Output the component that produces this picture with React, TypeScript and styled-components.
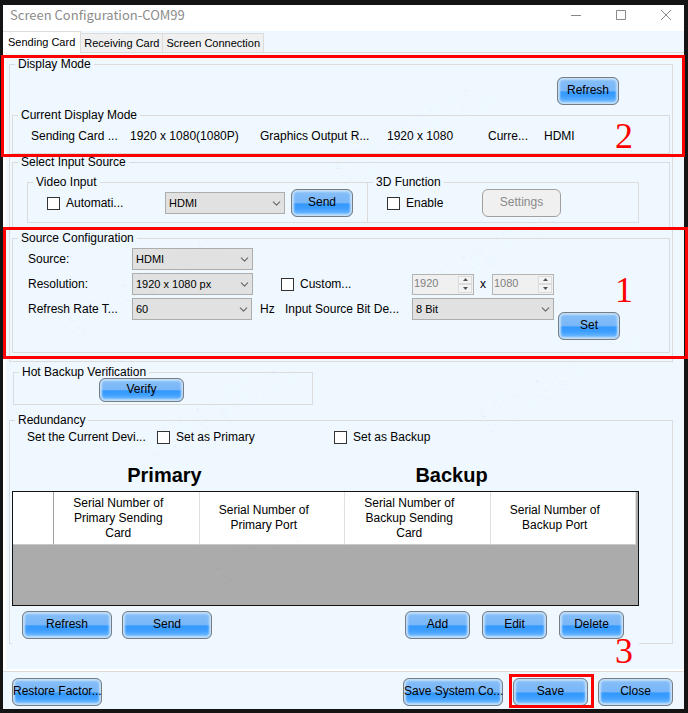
import React from "react";
import styled, { createGlobalStyle } from "styled-components";
import { ChevronDown } from "lucide-react";

const GlobalStyle = createGlobalStyle`
  * {
    box-sizing: border-box;
  }
  body {
    margin: 0;
    background-color: #141414;
    font-family: "Liberation Sans", Arial, sans-serif;
    font-size: 12px;
    line-height: 16px;
    color: #000;
  }
`;

const Window = styled.div`
  position: relative;
  margin: 5px 4px 4px 3px;
  background-color: #eff7ff;
`;
const TitleBar = styled.header`
  display: flex;
  align-items: center;
  justify-content: space-between;
  height: 26px;
  padding: 0 12px 6px 7px;
  background-color: white;
`;
const Title = styled.h1`
  margin: 0;
  font-family: "Noto Sans CJK SC", sans-serif;
  font-size: 13px;
  font-weight: 400;
  line-height: 20px;
  color: #8c8c8c;
`;
const WindowButtons = styled.div`
  display: flex;
  gap: 33px;
`;
const WindowButton = styled.button`
  width: 12px;
  height: 12px;
  padding: 0;
  border: none;
  background: none;
  color: #888;

  svg {
    display: block;
  }
`;

const TabBar = styled.nav`
  display: flex;
  align-items: flex-end;
  height: 22px;
  border-bottom: 1px solid #dcdcdc;
`;
const Tab = styled.button<{ $active?: boolean }>`
  height: ${({ $active }) => ($active ? "22px" : "19px")};
  margin-bottom: ${({ $active }) => ($active ? "-1px" : "0")};
  padding: 0 ${({ $active }) => ($active ? "5px 2px" : "3px")};
  border: 1px solid #dcdcdc;
  border-width: 1px 1px 0 0;
  background-color: ${({ $active }) => ($active ? "white" : "#f0f0f0")};
  font-family: inherit;
  font-size: 11px;
  line-height: 16px;
  color: black;
`;

const Page = styled.main`
  padding: 3px 11px 25px 3px;
  border: 3px solid white;
  border-width: 0 0 2px 3px;
`;
const Group = styled.fieldset`
  min-width: 0;
  margin: 0;
  padding: 0 2px;
  border: 1px solid #dcdcdc;
`;
const Legend = styled.legend`
  margin-left: 3px;
  padding: 0 3px;
  line-height: 16px;
`;
const DisplayGroup = styled(Group)`
  padding-bottom: 8px;
`;
const Marked = styled.div`
  position: relative;
`;
// red frames lie over the form and run past the group borders
const DisplayFrame = styled.div`
  position: absolute;
  inset: -17px -15px -3px -11px;
  border: 3px solid red;
  pointer-events: none;
`;
const SourceFrame = styled(DisplayFrame)`
  inset: -3px -18px -6px -9px;
`;
const SaveFrame = styled(DisplayFrame)`
  inset: -4px -6px -2px -4px;
`;
const StepNumber = styled.span<{ $top: number; $right: number }>`
  position: absolute;
  top: ${({ $top }) => $top}px;
  right: ${({ $right }) => $right}px;
  font-family: "Liberation Serif", serif;
  font-size: 36px;
  line-height: 36px;
  color: red;
`;

const Button = styled.button<{ $width: number; $small?: boolean }>`
  flex: none;
  width: ${({ $width }) => $width}px;
  height: ${({ $small }) => ($small ? "24px" : "28px")};
  padding: 0 0 2px;
  border: 1px solid #777d84;
  border-radius: 6px;
  background: linear-gradient(#86bff8, #7ab7f8 48%, #3499fd 54%, #3b9dff 70%, #7cc0ff);
  box-shadow: inset 0 0 2px 2px #c3dff8;
  font-family: inherit;
  font-size: 12px;
  line-height: 16px;
  white-space: nowrap;
  color: black;

  &:disabled {
    border-color: #a0a0a0;
    background: #f0f0f0;
    box-shadow: none;
    color: #8a8a8a;
  }
`;
const SendButton = styled(Button)`
  margin-left: 6px;
`;

const RefreshRow = styled.div`
  display: flex;
  justify-content: flex-end;
  padding: 5px 51px 2px 0;
`;
const ModeList = styled.div`
  display: grid;
  grid-template-columns: 99px 130px 127px 101px 56px 1fr;
  padding: 0 0 4px 16px;
  line-height: 26px;
`;

const InputGroup = styled(Group)`
  padding-bottom: 6px;
`;
const InputRow = styled.div`
  display: flex;
  padding: 4px 28px 0 12px;
`;
const VideoGroup = styled(Group)`
  width: 341px;
`;
const FunctionGroup = styled(Group)`
  flex: 1;
  margin-left: -1px;
`;
const ControlRow = styled.div`
  display: flex;
  align-items: center;
  height: 28px;
  margin: -1px 0 5px;
  padding-left: 17px;
`;
const CheckLabel = styled.label<{ $width?: number }>`
  display: flex;
  align-items: center;
  gap: 6px;
  width: ${({ $width }) => ($width ? `${$width}px` : "auto")};
`;
const CheckBox = styled.input.attrs({ type: "checkbox" })`
  appearance: none;
  width: 13px;
  height: 13px;
  margin: 0;
  border: 1px solid #333;
  background-color: white;
`;

const SelectBox = styled.span<{ $width: number }>`
  position: relative;
  display: block;
  flex: none;
  width: ${({ $width }) => $width}px;
  height: 22px;

  svg {
    position: absolute;
    top: 5px;
    right: 2px;
    pointer-events: none;
  }
`;
const SelectInput = styled.select`
  appearance: none;
  width: 100%;
  height: 22px;
  padding: 0 16px 0 3px;
  border: 1px solid #adadad;
  border-radius: 0;
  background-color: #e1e1e1;
  font-family: inherit;
  font-size: 11px;
  color: black;
`;

const SourceGroup = styled(Group)`
  height: 123px;
`;
const SourceBody = styled.div`
  display: flex;
  gap: 4px;
  padding: 2px 0 0 13px;
`;
const SourceRows = styled.div`
  display: grid;
  grid-template-columns: 104px 128px 25px 127px 142px;
  grid-template-rows: 22px 22px 22px;
  row-gap: 3px;
  align-items: center;
`;
const CustomCell = styled.div`
  grid-column: 3 / 5;
  padding-left: 21px;
`;
const SizeCell = styled.div`
  display: flex;
  justify-content: space-between;
  align-items: center;
`;
const SetCell = styled.div`
  padding-top: 64px;
`;
const SpinBox = styled.span`
  display: flex;
  width: 62px;
  height: 21px;
  padding: 1px;
  border: 1px solid #b4b4b4;
  background-color: #f0f0f0;
`;
const SpinInput = styled.input`
  flex: 1;
  min-width: 0;
  padding: 0 0 2px;
  border: none;
  background: none;
  font-family: inherit;
  font-size: 11px;
  color: #808080;
`;
const SpinButtons = styled.span`
  display: flex;
  flex-direction: column;
  width: 14px;
`;
const SpinButton = styled.button`
  display: flex;
  flex: 1;
  align-items: center;
  justify-content: center;
  min-height: 0;
  padding: 0;
  border: 1px solid #dcdcdc;
  background-color: #f4f4f4;
`;

const BackupGroup = styled(Group)`
  width: 300px;
  margin: 2px 0 7px 4px;
`;
const BackupBody = styled.div`
  margin-top: -2px;
  padding: 0 0 2px 83px;
  line-height: 0;
`;

// the panel is painted over part of the bottom border
const RedundancyPanel = styled.div`
  margin: 0 31px -1px 0;
  background-color: #eff7ff;
`;
const DeviceRow = styled.div`
  display: grid;
  grid-template-columns: 130px 177px 1fr;
  align-items: center;
  height: 18px;
  padding-left: 15px;
`;
const HeadingRow = styled.div`
  display: flex;
  padding: 17px 0 4px 9px;
`;
const Heading = styled.h2`
  width: 287px;
  margin: 0;
  font-size: 20px;
  line-height: 24px;
  text-align: center;
`;
const Table = styled.table`
  width: 100%;
  padding-right: 2px;
  border: 1px solid #111;
  border-spacing: 0;
  table-layout: fixed;
  background-color: #ababab;
`;
const Th = styled.th<{ $corner?: boolean }>`
  width: ${({ $corner }) => ($corner ? "41px" : "auto")};
  height: 53px;
  padding: ${({ $corner }) => ($corner ? "0" : "0 25px 0 9px")};
  border-right: 1px solid ${({ $corner }) => ($corner ? "#a0a0a0" : "#e0e0e0")};
  border-bottom: 1px solid #c8c8c8;
  background-color: white;
  font-weight: 400;
  line-height: 15px;
`;
const EmptyCell = styled.td`
  height: 60px;
  padding: 0;
`;
const ActionRow = styled.div`
  display: flex;
  gap: 10px;
  padding: 5px 15px 5px 10px;
`;
const RowActions = styled.div`
  display: flex;
  gap: 12px;
  margin-left: auto;
`;

const Footer = styled.footer`
  display: flex;
  gap: 10px;
  padding: 6px 11px 3px 9px;
  border-top: 1px solid #dcdcdc;
`;
const Spacer = styled.div`
  flex: 1;
`;

const Watermarks = styled.div`
  position: absolute;
  inset: 0;
  overflow: hidden;
  pointer-events: none;
`;
const Watermark = styled.div`
  position: absolute;
  transform: rotate(-30deg);
  transform-origin: 0 50%;
  font-family: "Liberation Sans", "Noto Sans CJK SC", sans-serif;
  font-size: 13px;
  line-height: 15px;
  white-space: nowrap;
  color: rgba(0, 0, 0, 0.03);
`;

// sheared grid of stamps, only those that fit inside the window
const marks: number[][] = [];
for (let a = -3; a <= 3; a++) {
  for (let b = -5; b <= 6; b++) {
    const x = 395 + a * 266 + b * 73;
    const y = 286 - a * 152 + b * 124;
    if (x > 8 && x < 500 && y > 110 && y < 680) marks.push([x, y]);
  }
}

const Select = ({ label, value, width }: { label: string; value: string; width: number }) => (
  <SelectBox $width={width}>
    <SelectInput aria-label={label} defaultValue={value}>
      <option>{value}</option>
    </SelectInput>
    <ChevronDown size={13} strokeWidth={2} color="#666" />
  </SelectBox>
);

const Spin = ({ label, value }: { label: string; value: string }) => (
  <SpinBox>
    <SpinInput aria-label={label} defaultValue={value} disabled />
    <SpinButtons>
      <SpinButton aria-label={`Increase ${label}`} disabled>
        <svg width="5" height="3" viewBox="0 0 5 3"><path d="M0 3L2.5 0L5 3Z" fill="#555" /></svg>
      </SpinButton>
      <SpinButton aria-label={`Decrease ${label}`} disabled>
        <svg width="5" height="3" viewBox="0 0 5 3"><path d="M0 0L2.5 3L5 0Z" fill="#555" /></svg>
      </SpinButton>
    </SpinButtons>
  </SpinBox>
);

const columns = [
  "Serial Number of Primary Sending Card",
  "Serial Number of Primary Port",
  "Serial Number of Backup Sending Card",
  "Serial Number of Backup Port",
];

const App = () => {
  return (
    <>
      <GlobalStyle />
      <Window>
        <TitleBar>
          <Title>Screen Configuration-COM99</Title>
          <WindowButtons>
            <WindowButton aria-label="Minimize">
              <svg width="12" height="12" viewBox="0 0 12 12"><path d="M1 6.5H11" stroke="currentColor" /></svg>
            </WindowButton>
            <WindowButton aria-label="Maximize">
              <svg width="12" height="12" viewBox="0 0 12 12"><path d="M1.5 1.5H10.5V10.5H1.5Z" fill="none" stroke="currentColor" /></svg>
            </WindowButton>
            <WindowButton aria-label="Close window">
              <svg width="12" height="12" viewBox="0 0 12 12"><path d="M1 1L11 11M11 1L1 11" stroke="currentColor" /></svg>
            </WindowButton>
          </WindowButtons>
        </TitleBar>
        <TabBar>
          <Tab $active>Sending Card</Tab>
          <Tab>Receiving Card</Tab>
          <Tab>Screen Connection</Tab>
        </TabBar>
        <Page>
          <DisplayGroup>
            <Legend>Display Mode</Legend>
            <Marked>
              <RefreshRow>
                <Button $width={62}>Refresh</Button>
              </RefreshRow>
              <Group>
                <Legend>Current Display Mode</Legend>
                <ModeList>
                  <span>Sending Card ...</span>
                  <span>1920 x 1080(1080P)</span>
                  <span>Graphics Output R...</span>
                  <span>1920 x 1080</span>
                  <span>Curre...</span>
                  <span>HDMI</span>
                </ModeList>
              </Group>
              <DisplayFrame />
              <StepNumber $top={46} $right={37}>2</StepNumber>
            </Marked>
            <InputGroup>
              <Legend>Select Input Source</Legend>
              <InputRow>
                <VideoGroup>
                  <Legend>Video Input</Legend>
                  <ControlRow>
                    <CheckLabel $width={118}>
                      <CheckBox />
                      Automati...
                    </CheckLabel>
                    <Select label="Video Input" value="HDMI" width={120} />
                    <SendButton $width={62}>Send</SendButton>
                  </ControlRow>
                </VideoGroup>
                <FunctionGroup>
                  <Legend>3D Function</Legend>
                  <ControlRow>
                    <CheckLabel $width={95}>
                      <CheckBox />
                      Enable
                    </CheckLabel>
                    <Button $width={79} disabled>Settings</Button>
                  </ControlRow>
                </FunctionGroup>
              </InputRow>
            </InputGroup>
            <Marked>
              <SourceGroup>
                <Legend>Source Configuration</Legend>
                <SourceBody>
                  <SourceRows>
                    <span>Source:</span>
                    <Select label="Source" value="HDMI" width={121} />
                    <span />
                    <span />
                    <span />
                    <span>Resolution:</span>
                    <Select label="Resolution" value="1920 x 1080 px" width={121} />
                    <CustomCell>
                      <CheckLabel>
                        <CheckBox />
                        Custom...
                      </CheckLabel>
                    </CustomCell>
                    <SizeCell>
                      <Spin label="Width" value="1920" />
                      <span>x</span>
                      <Spin label="Height" value="1080" />
                    </SizeCell>
                    <span>Refresh Rate T...</span>
                    <Select label="Refresh Rate" value="60" width={120} />
                    <span>Hz</span>
                    <span>Input Source Bit De...</span>
                    <Select label="Input Source Bit Depth" value="8 Bit" width={142} />
                  </SourceRows>
                  <SetCell>
                    <Button $width={62}>Set</Button>
                  </SetCell>
                </SourceBody>
              </SourceGroup>
              <SourceFrame />
              <StepNumber $top={42} $right={37}>1</StepNumber>
            </Marked>
          </DisplayGroup>
          <BackupGroup>
            <Legend>Hot Backup Verification</Legend>
            <BackupBody>
              <Button $width={85} $small>Verify</Button>
            </BackupBody>
          </BackupGroup>
          <Group>
            <Legend>Redundancy</Legend>
            <RedundancyPanel>
              <DeviceRow>
                <span>Set the Current Devi...</span>
                <CheckLabel>
                  <CheckBox />
                  Set as Primary
                </CheckLabel>
                <CheckLabel>
                  <CheckBox />
                  Set as Backup
                </CheckLabel>
              </DeviceRow>
              <HeadingRow>
                <Heading>Primary</Heading>
                <Heading>Backup</Heading>
              </HeadingRow>
              <Table>
                <thead>
                  <tr>
                    <Th $corner />
                    {columns.map((column) => (
                      <Th key={column}>{column}</Th>
                    ))}
                  </tr>
                </thead>
                <tbody>
                  <tr>
                    <EmptyCell colSpan={5} />
                  </tr>
                </tbody>
              </Table>
              <ActionRow>
                <Button $width={90}>Refresh</Button>
                <Button $width={90}>Send</Button>
                <RowActions>
                  <Button $width={65}>Add</Button>
                  <Button $width={65}>Edit</Button>
                  <Button $width={65}>Delete</Button>
                </RowActions>
              </ActionRow>
            </RedundancyPanel>
          </Group>
        </Page>
        <Footer>
          <Button $width={90}>Restore Factor...</Button>
          <Spacer />
          <Button $width={100}>Save System Co...</Button>
          <Marked>
            <Button $width={75}>Save</Button>
            <SaveFrame />
            <StepNumber $top={-45} $right={-45}>3</StepNumber>
          </Marked>
          <Button $width={75}>Close</Button>
        </Footer>
        <Watermarks aria-hidden="true">
          {marks.map(([x, y]) => (
            <Watermark key={`${x},${y}`} style={{ left: x, top: y }}>
              西安诺瓦星云科技股份有限公司
              <br />
              2026-05-27 2C-7B-A0-D1-82-24
            </Watermark>
          ))}
        </Watermarks>
      </Window>
    </>
  );
};

export default App;
